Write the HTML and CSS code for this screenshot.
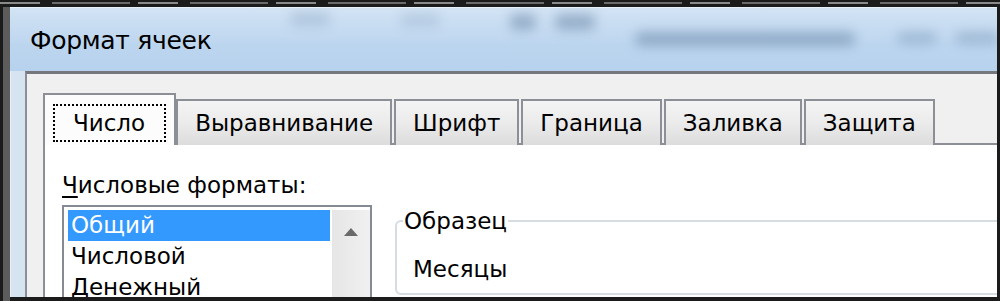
FILE: index.html
```html
<!DOCTYPE html>
<html lang="ru">

<head>
    <meta charset="UTF-8">
    <meta name="viewport" content="width=device-width, initial-scale=1.0">
    <title>Формат ячеек</title>
    <link rel="stylesheet" href="styles.css">
</head>

<body>
    <div class="screen">
        <div class="topstrip"></div>
        <div class="window">
            <div class="titlebar">
                <span class="blob b1"></span>
                <span class="blob b2"></span>
                <span class="blob b3"></span>
                <span class="blob b4"></span>
                <span class="blob b5"></span>
                <span class="blob b6"></span>
                <span class="blob b7"></span>
                <span class="title">Формат ячеек</span>
            </div>
            <div class="client">
                <div class="tabs">
                    <div class="tab active"><span class="focus">Число</span></div>
                    <div class="tab">Выравнивание</div>
                    <div class="tab">Шрифт</div>
                    <div class="tab">Граница</div>
                    <div class="tab">Заливка</div>
                    <div class="tab">Защита</div>
                </div>
                <div class="panel">
                    <div class="formats">
                        <div class="label"><u>Ч</u>исловые форматы:</div>
                        <div class="listbox">
                            <ul class="items">
                                <li class="selected">Общий</li>
                                <li>Числовой</li>
                                <li>Денежный</li>
                            </ul>
                            <div class="scrollbar">
                                <svg width="16" height="10" viewBox="0 0 16 10">
                                    <polygon points="8,1 15,9 1,9" fill="#6a6a6a"/>
                                </svg>
                            </div>
                        </div>
                    </div>
                    <fieldset class="sample">
                        <legend>Образец</legend>
                        <div class="sample-text">Месяцы</div>
                    </fieldset>
                </div>
            </div>
        </div>
    </div>
</body>

</html>
```

FILE: styles.css
```css
body {
    margin: 0;
    font-family: "DejaVu Sans", "Liberation Sans", sans-serif;
    color: #000;
}

.screen {
    width: 1000px;
    height: 301px;
    box-sizing: border-box;
    padding: 0 3px 4px 3px;
    background: linear-gradient(to right, #1b1b1b 0 3px, #5c5c5c 3px 10px, #1b1b1b 10px);
    display: flex;
    flex-direction: column;
    overflow: hidden;
}

.topstrip {
    flex-shrink: 0;
    height: 7px;
    margin: 0 -3px;
    background:
        repeating-linear-gradient(to right, #8a8a8a 0 40px, #1b1b1b 40px 52px, #6b6b6b 52px 130px, #1b1b1b 130px 138px) 0 2px / 100% 2px no-repeat,
        #1b1b1b;
}

.window {
    flex: 1;
    min-height: 0;
    margin-left: 7px;
    display: flex;
    flex-direction: column;
    overflow: hidden;
    background: linear-gradient(to right, #e9f0f7 0 1px, #d6e3f0 1px);
    border-top: 1px solid #e8f0f8;
}

.titlebar {
    flex-shrink: 0;
    position: relative;
    height: 63px;
    box-sizing: border-box;
    padding: 18px 0 0 20px;
    background: linear-gradient(#d2e3f4, #bcd5ef 60%, #b7d2ee);
    overflow: hidden;
}

.title {
    position: relative;
    font-size: 25px;
    line-height: 30px;
    letter-spacing: -0.3px;
}

.blob {
    position: absolute;
    background: rgba(72, 104, 140, 0.4);
    filter: blur(6px);
    border-radius: 6px;
}

.b1 { left: 280px; top: 4px; width: 40px; height: 14px; opacity: 0.5; }
.b2 { left: 390px; top: 5px; width: 40px; height: 14px; opacity: 0.4; }
.b3 { left: 500px; top: 6px; width: 26px; height: 16px; }
.b4 { left: 545px; top: 6px; width: 40px; height: 16px; }
.b5 { left: 625px; top: 24px; width: 220px; height: 14px; }
.b6 { left: 887px; top: 24px; width: 40px; height: 12px; opacity: 0.7; }
.b7 { left: 945px; top: 24px; width: 45px; height: 12px; opacity: 0.7; }

.client {
    flex: 1;
    min-height: 0;
    margin-left: 15px;
    margin-right: -40px;
    background: #f0f0f0;
    border-top: 3px solid #74787d;
    border-left: 2px solid #8b8f94;
    padding: 19px 0 0 16px;
    display: flex;
    flex-direction: column;
}

.tabs {
    flex-shrink: 0;
    display: flex;
    align-items: flex-end;
    margin-bottom: -2px;
    position: relative;
    z-index: 1;
}

.tab {
    font-size: 23px;
    line-height: 28px;
    height: 46px;
    box-sizing: border-box;
    padding: 8px 17px 0 17px;
    margin-right: 2px;
    border: 2px solid #8c8f96;
    border-bottom: none;
    background: linear-gradient(#f4f4f4, #ebebeb 50%, #dcdcdc);
}

.tab.active {
    height: 52px;
    padding: 9px 8px 0 8px;
    margin-right: 0;
    background: #fcfcfc;
}

.focus {
    display: block;
    padding: 3px 19px 3px 18px;
    border: 2px dotted #000;
}

.panel {
    flex: 1;
    min-height: 0;
    background: #fff;
    border-top: 2px solid #8c8f96;
    border-left: 2px solid #8c8f96;
    padding: 26px 0 0 17px;
    display: flex;
    align-items: flex-start;
}

.label {
    font-size: 23px;
    line-height: 28px;
    margin-bottom: 6px;
}

.label u {
    text-underline-offset: 3px;
}

.listbox {
    width: 310px;
    height: 140px;
    box-sizing: border-box;
    border: 2px solid #868a92;
    padding: 3px 0 0 4px;
    display: flex;
}

.items {
    list-style: none;
    margin: 0;
    padding: 0;
    flex: 1;
}

.items li {
    font-size: 23px;
    line-height: 31px;
    padding-left: 3px;
}

.items li.selected {
    background: #3399ff;
    color: #fff;
}

.scrollbar {
    width: 38px;
    margin-left: 2px;
    background: linear-gradient(to right, #e6e6e6, #f0f0f0);
    display: flex;
    justify-content: center;
    align-items: flex-start;
    padding-top: 17px;
    box-sizing: border-box;
}

.sample {
    flex: 1;
    margin: 36px 0 0 23px;
    height: 88px;
    box-sizing: border-box;
    border: 2px solid #d5dde3;
    border-radius: 6px;
    padding: 20px 0 0 16px;
}

.sample legend {
    font-size: 23px;
    line-height: 28px;
    padding: 0 1px;
    margin-left: -10px;
}

.sample-text {
    font-size: 23px;
    line-height: 28px;
}
```
